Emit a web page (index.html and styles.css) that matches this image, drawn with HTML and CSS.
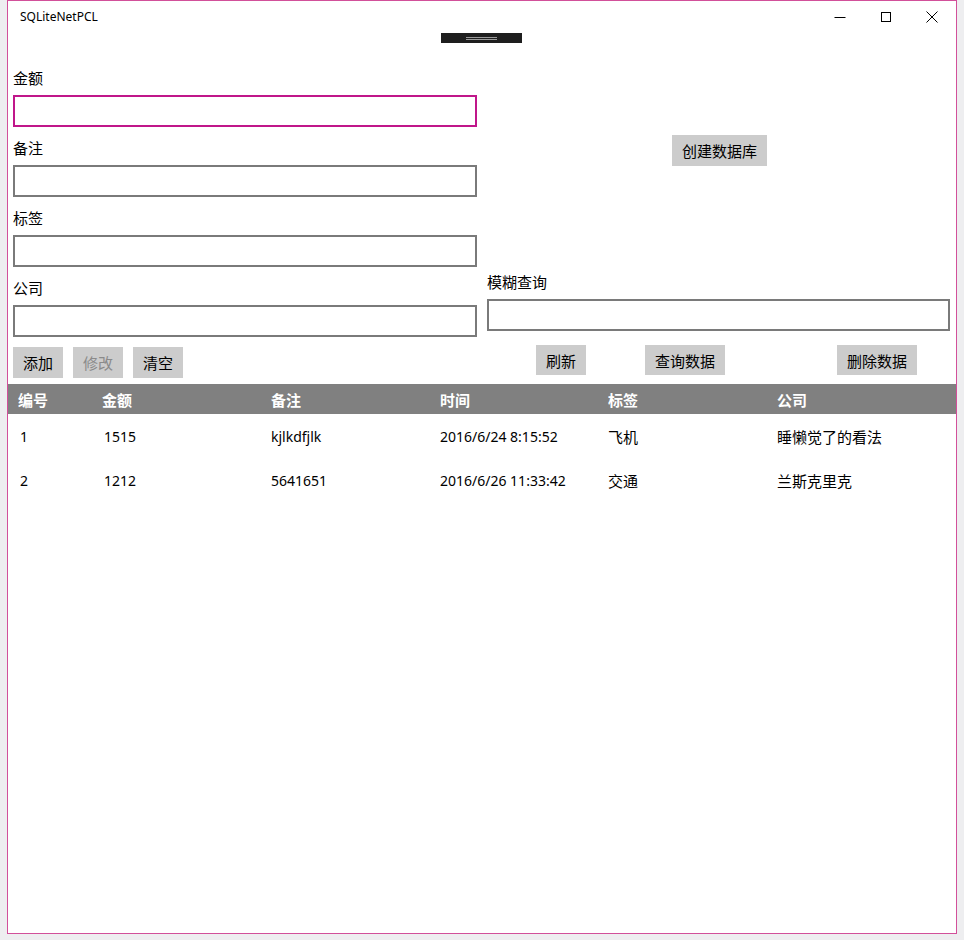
FILE: index.html
```html
<!DOCTYPE html>
<html lang="zh-CN">
<head>
  <meta charset="UTF-8">
  <meta name="viewport" content="width=device-width, initial-scale=1.0">
  <title>SQLiteNetPCL</title>
  <link rel="stylesheet" href="styles.css">
</head>
<body>
  <div class="window">
    <div class="titlebar">
      <span class="title">SQLiteNetPCL</span>
      <div class="caption">
        <span class="cap-btn">
          <svg width="12" height="12" viewBox="0 0 12 12"><path d="M0.5 6.5h11" stroke="#000" stroke-width="1"/></svg>
        </span>
        <span class="cap-btn">
          <svg width="12" height="12" viewBox="0 0 12 12"><rect x="1.5" y="1.5" width="9" height="9" fill="none" stroke="#000" stroke-width="1"/></svg>
        </span>
        <span class="cap-btn">
          <svg width="12" height="12" viewBox="0 0 12 12"><path d="M0.5 0.5l11 11M11.5 0.5l-11 11" stroke="#000" stroke-width="1"/></svg>
        </span>
      </div>
    </div>

    <div class="debugbar"><span class="grip"></span></div>

    <div class="content">
      <div class="col-left">
        <div class="field">
          <label>金额</label>
          <div class="textbox focused"></div>
        </div>
        <div class="field">
          <label>备注</label>
          <div class="textbox"></div>
        </div>
        <div class="field">
          <label>标签</label>
          <div class="textbox"></div>
        </div>
        <div class="field">
          <label>公司</label>
          <div class="textbox"></div>
        </div>
        <div class="btn-row left-btns">
          <button class="btn">添加</button>
          <button class="btn" disabled>修改</button>
          <button class="btn">清空</button>
        </div>
      </div>

      <div class="col-right">
        <div class="create-wrap">
          <button class="btn btn-create">创建数据库</button>
        </div>
        <div class="field search">
          <label>模糊查询</label>
          <div class="textbox"></div>
        </div>
        <div class="btn-row right-btns">
          <button class="btn btn-refresh">刷新</button>
          <button class="btn btn-wide btn-query">查询数据</button>
          <button class="btn btn-wide btn-delete">删除数据</button>
        </div>
      </div>
    </div>

    <div class="grid">
      <div class="grid-row header">
        <span>编号</span><span>金额</span><span>备注</span><span>时间</span><span>标签</span><span>公司</span>
      </div>
      <div class="grid-row">
        <span>1</span><span>1515</span><span>kjlkdfjlk</span><span>2016/6/24 8:15:52</span><span>飞机</span><span>睡懒觉了的看法</span>
      </div>
      <div class="grid-row">
        <span>2</span><span>1212</span><span>5641651</span><span>2016/6/26 11:33:42</span><span>交通</span><span>兰斯克里克</span>
      </div>
    </div>
  </div>
</body>
</html>
```

FILE: styles.css
```css
html, body {
  margin: 0;
  padding: 0;
}

body {
  width: 964px;
  height: 940px;
  background: #eeeef0;
  font-family: "Noto Sans", "Noto Sans CJK SC", sans-serif;
  font-size: 14px;
  color: #000;
  overflow: hidden;
}

.window {
  position: relative;
  margin-left: 7px;
  width: 948px;
  height: 932px;
  border: 1px solid #d2509a;
  background: #fff;
}

/* title bar */
.titlebar {
  display: flex;
  align-items: center;
  justify-content: space-between;
  height: 32px;
}

.titlebar .title {
  margin-left: 12px;
  margin-top: -2px;
  font-size: 12px;
}

.caption {
  display: flex;
  height: 32px;
  margin-right: 1px;
}

.cap-btn {
  display: flex;
  align-items: center;
  justify-content: center;
  width: 46px;
  height: 32px;
}

.debugbar {
  position: absolute;
  top: 32px;
  left: 433px;
  width: 81px;
  height: 10px;
  background: #1e1e1e;
  display: flex;
  align-items: center;
  justify-content: center;
}

.debugbar .grip {
  display: block;
  width: 31px;
  height: 1px;
  border-top: 1px solid #9a9a9a;
  border-bottom: 1px solid #9a9a9a;
}

/* form */
.content {
  display: flex;
  gap: 10px;
  padding: 35px 6px 0 5px;
}

.col-left {
  width: 464px;
}

.col-right {
  width: 463px;
}

.field label {
  display: block;
  height: 20px;
  line-height: 20px;
  margin-bottom: 7px;
  font-size: 15px;
}

.field {
  margin-bottom: 11px;
}

.textbox {
  box-sizing: border-box;
  height: 32px;
  border: 2px solid #7a7a7a;
  background: #fff;
}

.textbox.focused {
  border-color: #c0168a;
}

.btn-row {
  display: flex;
}

.left-btns {
  gap: 10px;
  margin-top: -1px;
}

.btn {
  height: 31px;
  width: 50px;
  padding: 0;
  border: none;
  background: #cccccc;
  font-family: inherit;
  font-size: 15px;
  color: #000;
}

.btn:disabled {
  color: #8a8a8a;
}

.btn-wide {
  width: 80px;
}

.create-wrap {
  display: flex;
  justify-content: center;
  margin-top: 67px;
  padding-left: 2px;
}

.btn-create {
  width: 95px;
  height: 31px;
}

.field.search {
  margin-top: 106px;
  margin-bottom: 0;
}

.right-btns {
  margin-top: 14px;
}

.right-btns .btn {
  height: 30px;
}

.btn-refresh {
  margin-left: 49px;
}

.btn-query {
  margin-left: 59px;
}

.btn-delete {
  margin-left: 112px;
}

/* data grid */
.grid {
  margin-top: 6px;
}

.grid-row {
  display: grid;
  grid-template-columns: 84px 169px 169px 168px 169px 1fr;
  height: 44px;
  align-items: center;
}

.grid-row span {
  padding-left: 10px;
  white-space: nowrap;
}

.grid-row span:nth-child(1),
.grid-row span:nth-child(2) {
  padding-left: 12px;
}

/* 中文列用 15px，和数字列的宽度对上 */
.grid-row span:nth-child(5),
.grid-row span:nth-child(6) {
  font-size: 15px;
}

.grid-row.header {
  height: 30px;
  background: #808080;
  color: #fff;
  font-weight: bold;
}

.grid-row.header span {
  padding-left: 10px;
  font-size: 15px;
}
```
